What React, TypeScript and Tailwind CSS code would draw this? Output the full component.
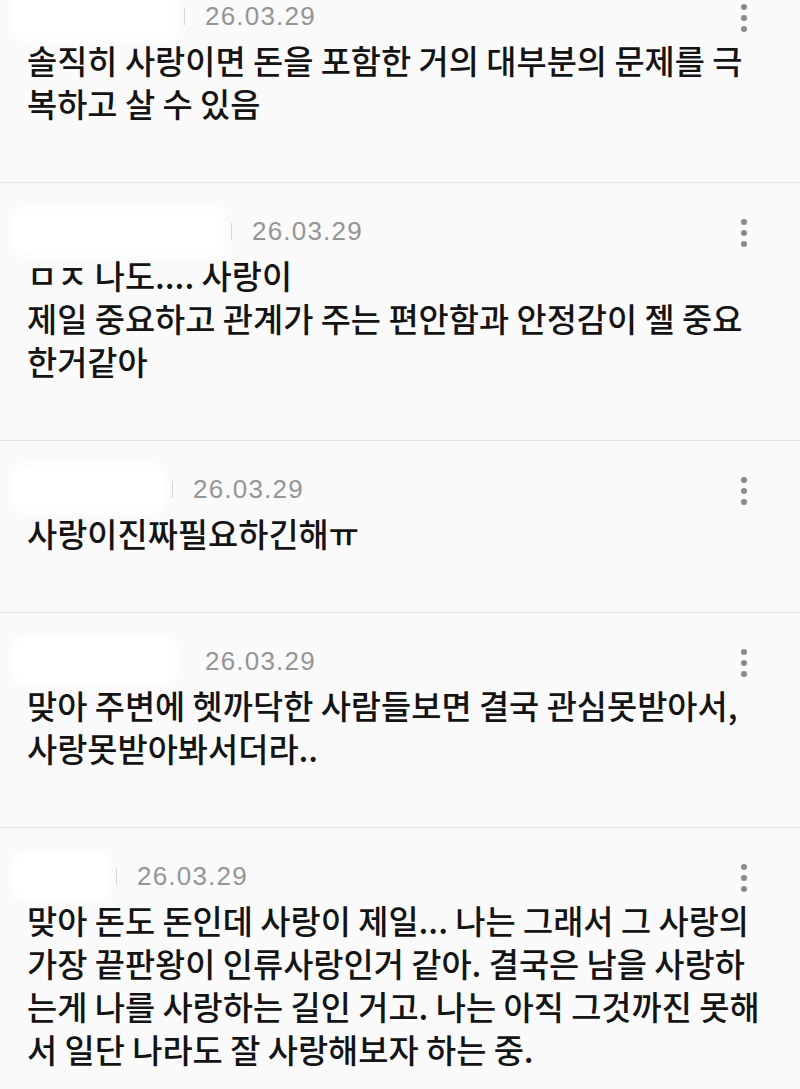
import React from "react";

type Comment = {
  nickW: number;
  date: string;
  lines: string[];
  sep?: boolean;
};

const comments: Comment[] = [
  {
    nickW: 153,
    date: "26.03.29",
    lines: ["솔직히 사랑이면 돈을 포함한 거의 대부분의 문제를 극", "복하고 살 수 있음"],
    sep: true,
  },
  {
    nickW: 200,
    date: "26.03.29",
    lines: ["ㅁㅈ 나도.... 사랑이", "제일 중요하고 관계가 주는 편안함과 안정감이 젤 중요", "한거같아"],
    sep: true,
  },
  {
    nickW: 141,
    date: "26.03.29",
    lines: ["사랑이진짜필요하긴해ㅠ"],
    sep: true,
  },
  {
    nickW: 153,
    date: "26.03.29",
    lines: ["맞아 주변에 헷까닥한 사람들보면 결국 관심못받아서,", "사랑못받아봐서더라.."],
    sep: false,
  },
  {
    nickW: 85,
    date: "26.03.29",
    lines: [
      "맞아 돈도 돈인데 사랑이 제일... 나는 그래서 그 사랑의",
      "가장 끝판왕이 인류사랑인거 같아. 결국은 남을 사랑하",
      "는게 나를 사랑하는 길인 거고. 나는 아직 그것까진 못해",
      "서 일단 나라도 잘 사랑해보자 하는 중.",
    ],
    sep: true,
  },
];

function Kebab() {
  return (
    <div className="flex flex-col items-center gap-[5px] pt-[4px]">
      <span className="block h-[6px] w-[6px] rounded-full bg-[#8a8a8a]" />
      <span className="block h-[6px] w-[6px] rounded-full bg-[#8a8a8a]" />
      <span className="block h-[6px] w-[6px] rounded-full bg-[#8a8a8a]" />
    </div>
  );
}

function CommentItem({ c, first }: { c: Comment; first: boolean }) {
  return (
    <div className={`border-b border-[#e6e6e6] pb-[58px] ${first ? "pt-0" : "pt-[32px]"}`}>
      <div className="flex items-start justify-between pl-[18px] pr-[53px]">
        <div className="flex h-8 items-center">
          <div
            className="h-[38px] rounded-md bg-white shadow-[0_0_8px_6px_rgba(255,255,255,1)]"
            style={{ width: c.nickW }}
          />
          <span className={`ml-[13px] h-[17px] w-px ${c.sep ? "bg-[#d6d6d6]" : "bg-transparent"}`} />
          <span className="ml-[20px] font-['Liberation_Sans',sans-serif] text-[26px] leading-none tracking-[1.2px] text-[#959595]">
            {c.date}
          </span>
        </div>
        <Kebab />
      </div>
      <div className="mt-[6px] pl-[27px] font-['Noto_Sans_CJK_KR',sans-serif] text-[32.8px] font-medium text-[#141414]">
        {c.lines.map((l, i) => (
          <div key={i} className="flex h-[43px] items-center whitespace-nowrap leading-[43px]">
            {l}
          </div>
        ))}
      </div>
    </div>
  );
}

export default function App() {
  return (
    <div className="h-[1089px] w-[800px] overflow-hidden bg-[#fafafa]">
      {comments.map((c, i) => (
        <CommentItem key={i} c={c} first={i === 0} />
      ))}
    </div>
  );
}
